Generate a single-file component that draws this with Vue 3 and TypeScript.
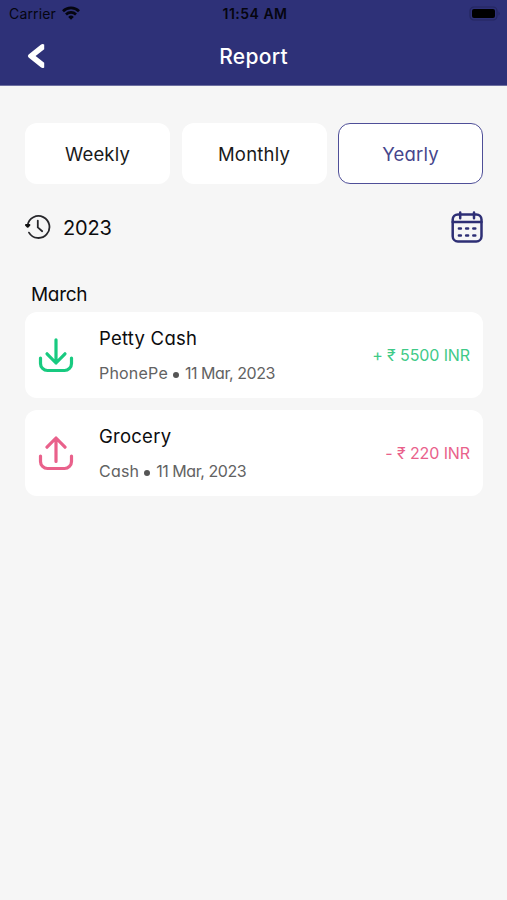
<script setup lang="ts">
import { ref } from 'vue'

interface Entry {
  id: string
  title: string
  method: string
  date: string
  amount: string
  kind: 'income' | 'expense'
}

const periods = ['Weekly', 'Monthly', 'Yearly']
const selected = ref('Yearly')

const entries: Entry[] = [
  { id: 'petty', title: 'Petty Cash', method: 'PhonePe', date: '11 Mar, 2023', amount: '+ ₹ 5500 INR', kind: 'income' },
  { id: 'grocery', title: 'Grocery', method: 'Cash', date: '11 Mar, 2023', amount: '- ₹ 220 INR', kind: 'expense' },
]
</script>

<template>
  <div class="screen">
    <header class="header">
      <div class="status">
        <div class="carrier">
          <span>Carrier</span>
          <svg class="wifi" width="18" height="14" viewBox="0 0 18 14" fill="none" stroke="#05050f" stroke-width="2.7">
            <path d="M1 5.2a11.4 11.4 0 0 1 16 0" />
            <path d="M4 8.5a7.1 7.1 0 0 1 10 0" />
            <path d="M9 13.7 6.2 10.9a4 4 0 0 1 5.6 0z" fill="#05050f" stroke="none" />
          </svg>
        </div>
        <span class="clock">11:54 AM</span>
        <svg class="battery" width="32" height="15" viewBox="0 0 32 15">
          <rect x="1" y="1" width="27" height="13" rx="4" fill="none" stroke="#24265f" stroke-width="1.2" />
          <rect x="3" y="3" width="23" height="9" rx="2" fill="#000" />
          <path d="M29.5 5.2q2.4 2.3 0 4.6z" fill="#24265f" />
        </svg>
      </div>
      <div class="nav">
        <button class="back" aria-label="Back">
          <svg width="20" height="26" viewBox="0 0 20 26">
            <path d="M18.2 1.6V6.2L9.6 13l8.6 6.8v4.6q-1.6 1.2-3.4-.1L2.6 14.6q-1.6-1.6 0-3.2L14.8 1.7q1.8-1.3 3.4-.1z" fill="#fff" />
          </svg>
        </button>
        <h1 class="title">Report</h1>
      </div>
    </header>

    <main class="content">
      <div class="tabs">
        <button
          v-for="p in periods"
          :key="p"
          class="tab"
          :class="{ active: selected === p }"
          @click="selected = p"
        >{{ p }}</button>
      </div>

      <div class="period">
        <svg width="26" height="26" viewBox="0 0 26 26" fill="none" stroke="#27272b" stroke-width="1.8" stroke-linecap="round" stroke-linejoin="round">
          <path d="M2.6 11.2A11 11 0 1 1 4 18.6" />
          <path d="M12.8 6.6v6.8l4.4 3.8" />
          <path d="M1 11h3.4l-1.7 1.8z" fill="#111" stroke="#111" stroke-width="2" />
        </svg>
        <span class="year">2023</span>
        <svg class="calendar" width="32" height="32" viewBox="0 0 32 32" fill="none" stroke="#2e2f75" stroke-width="2.5" stroke-linecap="round">
          <rect x="1.7" y="3.4" width="28.8" height="27" rx="5.2" />
          <path d="M1.7 10.9h28.8M9.2 1.6v5.6M23 1.6v5.6" />
          <path d="M7.9 17.4h2M15.1 17.4h2M22.3 17.4h2M7.9 24.4h2M15.1 24.4h2M22.3 24.4h2" />
        </svg>
      </div>

      <h2 class="month">March</h2>
      <ul class="list">
        <li v-for="e in entries" :key="e.id" class="card" :class="e.kind">
          <svg class="icon" width="36" height="36" viewBox="0 0 36 36" fill="none" stroke="currentColor" stroke-width="3.2" stroke-linecap="round" stroke-linejoin="round">
            <path d="M2.5 20v5.5a7 7 0 0 0 7 7h17a7 7 0 0 0 7-7V20" />
            <path v-if="e.kind === 'income'" d="M18 1.8V25M9 15.8 18 25l9-9.2" />
            <path v-else d="M18 25.5V2M9 11.2 18 2l9 9.2" />
          </svg>
          <div class="info">
            <span class="name">{{ e.title }}</span>
            <span class="meta"><span class="method">{{ e.method }}</span><i class="dot"></i><span class="date">{{ e.date }}</span></span>
          </div>
          <span class="amount">{{ e.amount }}</span>
        </li>
      </ul>
    </main>
  </div>
</template>

<style>
body {
  background: #f6f6f6;
}
</style>

<style scoped>
.screen {
  min-height: 900px;
  background: #f6f6f6;
  font-family: Inter, "Noto Sans", sans-serif;
  font-feature-settings: "cv11";
  color: #0c0c0e;
}
.header {
  height: 86px;
  box-sizing: border-box;
  background: #2e3178;
  border-bottom: 1px solid #6d6fa0;
}
.status {
  display: grid;
  grid-template-columns: 1fr auto 1fr;
  align-items: center;
  height: 27px;
  padding: 0 6px 0 9px;
  color: #05050f;
  font-feature-settings: normal;
  font-size: 14px;
  letter-spacing: 0.15px;
}
.carrier {
  display: flex;
  align-items: center;
  gap: 6px;
}
.wifi {
  margin-top: -2px;
}
.clock {
  font-weight: 600;
  font-size: 14px;
  letter-spacing: 0.5px;
}
.battery {
  justify-self: end;
}
.nav {
  display: grid;
  grid-template-columns: 60px 1fr 60px;
  align-items: center;
  height: 58px;
}
.back {
  display: flex;
  padding: 0;
  margin-left: 26px;
  border: 0;
  background: none;
}
.title {
  margin: 0;
  text-align: center;
  color: #fff;
  font-size: 21px;
  font-weight: 500;
  letter-spacing: 0.3px;
}
.content {
  padding: 37px 24px 0 25px;
}
.tabs {
  display: grid;
  grid-template-columns: repeat(3, 145px);
  justify-content: space-between;
}
.tab {
  height: 61px;
  padding: 1px 0 0;
  border: 1.5px solid transparent;
  border-radius: 12px;
  background: #fff;
  color: #1a1a1a;
  font: inherit;
  font-feature-settings: "cv11";
  font-size: 18.5px;
  letter-spacing: 0.2px;
}
.tab.active {
  border-color: #4f4f98;
  color: #46468c;
}
.period {
  display: flex;
  align-items: center;
  height: 32px;
  margin-top: 27px;
}
.year {
  margin-left: 12px;
  padding-top: 2px;
  font-size: 20px;
  letter-spacing: -0.2px;
}
.calendar {
  margin-left: auto;
}
.month {
  margin: 39px 0 4px 6px;
  font-size: 19px;
  font-weight: 400;
  line-height: 26px;
  letter-spacing: -0.3px;
}
.list {
  display: flex;
  flex-direction: column;
  gap: 12px;
  margin: 0;
  padding: 0;
  list-style: none;
}
.card {
  display: flex;
  align-items: center;
  height: 86px;
  box-sizing: border-box;
  padding: 0 13px;
  border-radius: 12px;
  background: #fff;
}
.icon {
  margin-top: 2px;
}
.income {
  color: #18ca80;
}
.expense {
  color: #e9618b;
}
.info {
  display: flex;
  flex-direction: column;
  gap: 11px;
  margin-left: 25px;
  padding-top: 1px;
}
.name {
  color: #0c0c0e;
  font-size: 18.5px;
  line-height: 24px;
  letter-spacing: 0.25px;
}
.meta {
  display: flex;
  align-items: center;
  color: #626262;
  font-size: 16px;
  line-height: 24px;
}
.method {
  letter-spacing: 0.2px;
}
.date {
  letter-spacing: -0.45px;
}
.dot {
  width: 6px;
  height: 6px;
  margin: 4px 6px 0 5px;
  border-radius: 50%;
  background: #555;
}
.amount {
  margin-left: auto;
  font-size: 16px;
  letter-spacing: -0.1px;
}
.income .amount {
  color: #3fca88;
}
</style>
